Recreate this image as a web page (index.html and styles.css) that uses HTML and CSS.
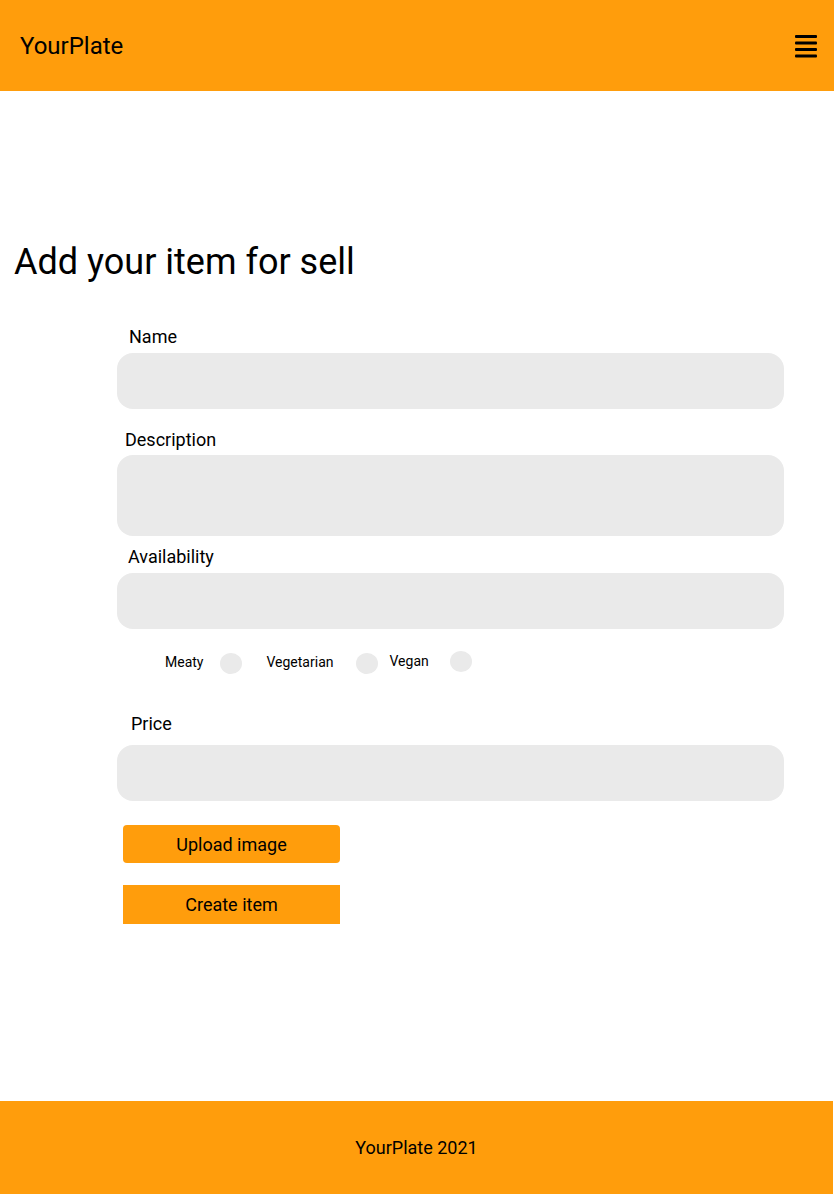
FILE: index.html
```html
<!DOCTYPE html>
<html lang="en">
<head>
<meta charset="utf-8">
<title>YourPlate - Add item</title>
<link rel="stylesheet" href="styles.css">
</head>
<body>
<div class="page">
  <header class="topbar">
    <span class="brand">YourPlate</span>
    <svg class="menu" width="24" height="24" viewBox="0 0 24 24" aria-hidden="true">
      <rect x="1" y="1" width="22" height="3" rx="1" fill="#000"/>
      <rect x="1" y="7.5" width="22" height="3" rx="1" fill="#000"/>
      <rect x="1" y="14" width="22" height="3" rx="1" fill="#000"/>
      <rect x="1" y="20.5" width="22" height="3" rx="1" fill="#000"/>
    </svg>
  </header>
  <main class="main">
    <h1 class="title">Add your item for sell</h1>
    <form class="form">
      <label class="label label-name">Name</label>
      <div class="field"></div>
      <label class="label label-desc">Description</label>
      <div class="field field-tall"></div>
      <label class="label label-avail">Availability</label>
      <div class="field"></div>
      <div class="radios">
        <span class="opt opt-meaty">Meaty</span><span class="dot dot-meaty"></span>
        <span class="opt opt-veg">Vegetarian</span><span class="dot dot-veg"></span>
        <span class="opt opt-vegan">Vegan</span><span class="dot dot-vegan"></span>
      </div>
      <label class="label label-price">Price</label>
      <div class="field field-price"></div>
      <div class="btn btn-upload">Upload image</div>
      <div class="btn btn-create">Create item</div>
    </form>
  </main>
  <footer class="footer">YourPlate 2021</footer>
</div>
</body>
</html>
```
FILE: styles.css
```css
* { box-sizing: border-box; }
html, body { margin: 0; padding: 0; }
body {
  font-family: Roboto, "Liberation Sans", sans-serif;
  color: #000;
  background: #fff;
}
.page {
  min-height: 1194px;
  display: flex;
  flex-direction: column;
}
.topbar {
  height: 91px;
  background: #ff9d0c;
  display: flex;
  align-items: center;
  justify-content: space-between;
  padding: 0 16px 0 20px;
}
.brand {
  font-size: 24px;
  line-height: 28px;
}
.menu {
  display: block;
  margin-top: 1px;
}
.main {
  flex: 1;
  display: flex;
  flex-direction: column;
}
.title {
  margin: 150px 0 0 14px;
  font-size: 36px;
  font-weight: 400;
  line-height: 42px;
}
.form {
  margin: 43px 0 0 117px;
  width: 667px;
  display: flex;
  flex-direction: column;
}
.label {
  font-size: 18px;
  line-height: 22px;
  margin-bottom: 5px;
}
.label-name { padding-left: 12px; }
.label-desc { padding-left: 8px; margin-top: 20px; margin-bottom: 4px; }
.label-avail { padding-left: 11px; margin-top: 10px; }
.label-price { padding-left: 14px; margin-top: 40px; margin-bottom: 10px; }
.field {
  height: 56px;
  background: #eaeaea;
  border-radius: 16px;
}
.field-tall { height: 81px; }
.radios {
  margin-top: 22px;
  height: 22px;
  display: flex;
  align-items: center;
  padding-left: 48px;
  font-size: 14px;
}
.dot {
  width: 22px;
  height: 21px;
  border-radius: 50%;
  background: #eaeaea;
  flex: none;
}
.dot-meaty { margin-left: 17px; margin-top: 2px; }
.opt-veg { margin-left: 24px; }
.dot-veg { margin-left: 23px; margin-top: 2px; }
.opt-vegan { margin-left: 11px; margin-top: -2px; }
.dot-vegan { margin-left: 21px; margin-top: -2px; }
.btn {
  width: 217px;
  background: #ff9d0c;
  font-size: 18px;
  text-align: center;
  margin-left: 6px;
}
.btn-upload {
  margin-top: 24px;
  height: 38px;
  line-height: 39px;
  border-radius: 4px;
}
.btn-create {
  margin-top: 22px;
  height: 39px;
  line-height: 39px;
}
.footer {
  height: 93px;
  width: 833px;
  background: #ff9d0c;
  display: flex;
  align-items: center;
  justify-content: center;
  font-size: 18px;
}
```
